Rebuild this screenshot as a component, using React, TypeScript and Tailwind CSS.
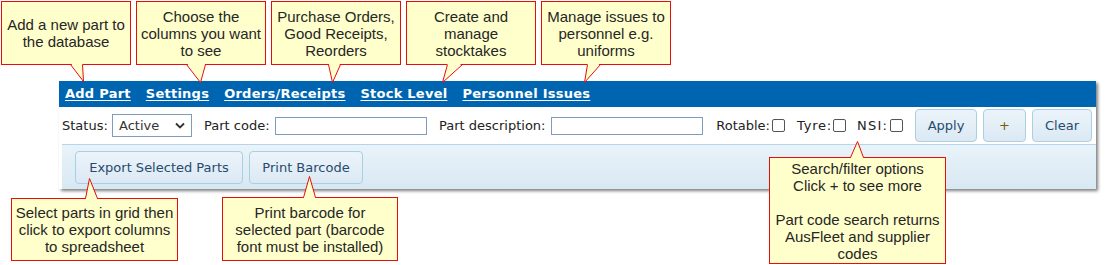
import React from "react";

const formFont = { fontFamily: '"DejaVu Sans", Verdana, sans-serif' };

function Callout({ className, lines }: { className: string; lines: string[] }) {
  return (
    <div
      className={`absolute flex flex-col items-center justify-center border border-[#e80c0c] bg-[#ffffcc] text-[15px] leading-[17px] text-[#262626] text-center ${className}`}
      style={{ fontFamily: '"Liberation Sans", Arial, sans-serif' }}
    >
      {lines.map((l, i) => (
        <div key={i} className="whitespace-nowrap h-[17px]">
          {l || "\u00a0"}
        </div>
      ))}
    </div>
  );
}

function Check() {
  return <span className="inline-block w-[13px] h-[13px] rounded-[2px] border border-[#555] bg-white" />;
}

function Btn({ children, className = "", textClass = "text-[#284a6c]" }: { children: React.ReactNode; className?: string; textClass?: string }) {
  return (
    <div
      className={`flex items-center justify-center h-[33px] rounded-[4px] border border-[#a9cfe5] bg-gradient-to-b from-[#ecf4fa] to-[#dbe9f4] text-[13px] ${textClass} ${className}`}
    >
      {children}
    </div>
  );
}

const tails: { a: [number, number]; t: [number, number]; b: [number, number] }[] = [
  { a: [70, 64], t: [83, 81], b: [82, 64] },
  { a: [186, 64], t: [200, 82], b: [205, 64] },
  { a: [328, 64], t: [332, 82], b: [340, 64] },
  { a: [447, 64], t: [442, 82], b: [462, 64] },
  { a: [587, 64], t: [584, 82], b: [600, 64] },
  { a: [85, 198], t: [89, 178], b: [97, 198] },
  { a: [303, 197], t: [309, 176], b: [315, 197] },
  { a: [850, 157], t: [857, 141], b: [863, 157] },
];

export default function App() {
  return (
    <div className="relative w-[1106px] h-[265px] bg-white overflow-hidden">
      {/* Panel */}
      <div className="ml-[59px] pt-[81px] w-[1037px]">
        <div className="shadow-[2px_2px_3px_rgba(0,0,0,0.5)] bg-white">
          <div
            className="h-[26px] bg-[#0065b0] flex items-center pl-[6px] gap-[15px] text-white text-[13px] font-bold tracking-[0.25px]"
            style={formFont}
          >
            <span className="underline underline-offset-2">Add Part</span>
            <span className="underline underline-offset-2">Settings</span>
            <span className="underline underline-offset-2">Orders/Receipts</span>
            <span className="underline underline-offset-2">Stock Level</span>
            <span className="underline underline-offset-2">Personnel Issues</span>
          </div>
          <div className="h-[37px] flex items-center pl-[3px] text-[13px] text-[#222] whitespace-nowrap" style={formFont}>
            <span className="w-[50px]">Status:</span>
            <div className="w-[80px] h-[23px] border border-[#7f9cbc] flex items-center justify-between pl-[6px] pr-[6px] text-[#333]">
              <span>Active</span>
              <svg width="10" height="7" viewBox="0 0 10 7">
                <path d="M1 1.5 L5 5.5 L9 1.5" fill="none" stroke="#333" strokeWidth="1.8" />
              </svg>
            </div>
            <span className="ml-[12px] w-[71px]">Part code:</span>
            <div className="w-[152px] h-[18px] border border-[#7f9cbc] bg-white" />
            <span className="ml-[12px] w-[112px]">Part description:</span>
            <div className="w-[152px] h-[18px] border border-[#7f9cbc] bg-white" />
            <span className="ml-[11px] w-[58px] text-right pr-[2px]">Rotable:</span>
            <Check />
            <span className="ml-[12px] w-[36px] text-right pr-[2px] tracking-[0.8px]">Tyre:</span>
            <Check />
            <span className="ml-[11px] w-[33px] text-right pr-[2px] tracking-[1.2px]">NSI:</span>
            <Check />
            <Btn className="ml-[12px] w-[62px]">Apply</Btn>
            <Btn className="ml-[6px] w-[43px]" textClass="text-[#7a5a00]">+</Btn>
            <Btn className="ml-[6px] w-[60px]">Clear</Btn>
          </div>
          <div
            className="ml-[3px] h-[45px] border-t border-[#b5d6ea] bg-gradient-to-b from-[#e9f3f9] to-[#d8e8f3] flex items-start pt-[6px] pl-[13px] gap-[6px]"
            style={formFont}
          >
            <Btn className="w-[168px]">Export Selected Parts</Btn>
            <Btn className="w-[114px]">Print Barcode</Btn>
          </div>
        </div>
      </div>

      {/* Callouts */}
      <Callout className="left-[1px] top-[1px] w-[130px] h-[64px]" lines={["Add a new part to", "the database"]} />
      <Callout className="left-[136px] top-[1px] w-[130px] h-[64px]" lines={["Choose the", "columns you want", "to see"]} />
      <Callout className="left-[271px] top-[1px] w-[130px] h-[64px]" lines={["Purchase Orders,", "Good Receipts,", "Reorders"]} />
      <Callout className="left-[406px] top-[1px] w-[130px] h-[64px]" lines={["Create and", "manage", "stocktakes"]} />
      <Callout className="left-[541px] top-[1px] w-[130px] h-[64px]" lines={["Manage issues to", "personnel e.g.", "uniforms"]} />
      <Callout
        className="left-[11px] top-[198px] w-[167px] h-[63px]"
        lines={["Select parts in grid then", "click to export columns", "to spreadsheet"]}
      />
      <Callout
        className="left-[222px] top-[197px] w-[176px] h-[64px]"
        lines={["Print barcode for", "selected part (barcode", "font must be installed)"]}
      />
      <Callout
        className="left-[769px] top-[157px] w-[177px] h-[107px]"
        lines={["Search/filter options", "Click + to see more", "", "Part code search returns", "AusFleet and supplier", "codes"]}
      />

      <svg className="absolute inset-0 pointer-events-none" width="1106" height="265">
        {tails.map((t, i) => {
          const up = t.t[1] < t.a[1];
          const by = up ? t.a[1] + 1.5 : t.a[1] - 1.5;
          return (
            <g key={i}>
              <polygon
                points={`${t.a[0] + 0.5},${by} ${t.t[0] + 0.5},${t.t[1] + 0.5} ${t.b[0] + 0.5},${by}`}
                fill="#ffffcc"
              />
              <polyline
                points={`${t.a[0] + 0.5},${t.a[1] + 0.5} ${t.t[0] + 0.5},${t.t[1] + 0.5} ${t.b[0] + 0.5},${t.b[1] + 0.5}`}
                fill="none"
                stroke="#e80c0c"
                strokeWidth="1"
              />
            </g>
          );
        })}
      </svg>
    </div>
  );
}
